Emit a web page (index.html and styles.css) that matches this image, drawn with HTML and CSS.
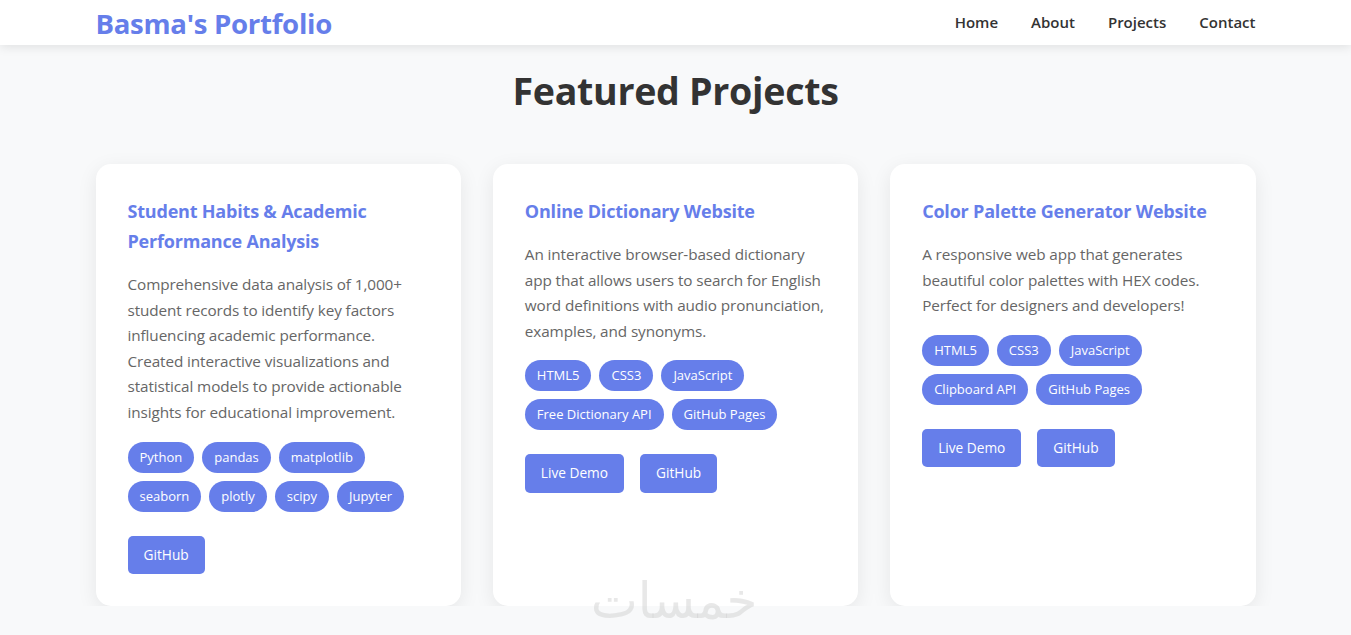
FILE: index.html
```html
<!DOCTYPE html>
<html lang="en">
<head>
<meta charset="utf-8">
<title>Basma's Portfolio</title>
<link rel="stylesheet" href="styles.css">
</head>
<body>
<header class="site-header">
  <div class="container header-inner">
    <a class="logo" href="#">Basma's Portfolio</a>
    <nav class="nav">
      <a href="#">Home</a>
      <a href="#">About</a>
      <a href="#">Projects</a>
      <a href="#">Contact</a>
    </nav>
  </div>
</header>
<main class="projects">
  <div class="container">
    <h1 class="section-title">Featured Projects</h1>
    <div class="grid">
      <article class="card">
        <h3 class="card-title">Student Habits &amp; Academic Performance Analysis</h3>
        <p class="card-text">Comprehensive data analysis of 1,000+ student records to identify key factors influencing academic performance. Created interactive visualizations and statistical models to provide actionable insights for educational improvement.</p>
        <div class="tags">
          <span class="tag">Python</span><span class="tag">pandas</span><span class="tag">matplotlib</span><span class="tag">seaborn</span><span class="tag">plotly</span><span class="tag">scipy</span><span class="tag">Jupyter</span>
        </div>
        <div class="buttons">
          <a class="btn" href="#">GitHub</a>
        </div>
      </article>
      <article class="card">
        <h3 class="card-title">Online Dictionary Website</h3>
        <p class="card-text">An interactive browser-based dictionary app that allows users to search for English word definitions with audio pronunciation, examples, and synonyms.</p>
        <div class="tags">
          <span class="tag">HTML5</span><span class="tag">CSS3</span><span class="tag">JavaScript</span><span class="tag">Free Dictionary API</span><span class="tag">GitHub Pages</span>
        </div>
        <div class="buttons">
          <a class="btn" href="#">Live Demo</a>
          <a class="btn" href="#">GitHub</a>
        </div>
      </article>
      <article class="card">
        <h3 class="card-title">Color Palette Generator Website</h3>
        <p class="card-text">A responsive web app that generates beautiful color palettes with HEX codes. Perfect for designers and developers!</p>
        <div class="tags">
          <span class="tag">HTML5</span><span class="tag">CSS3</span><span class="tag">JavaScript</span><span class="tag">Clipboard API</span><span class="tag">GitHub Pages</span>
        </div>
        <div class="buttons">
          <a class="btn" href="#">Live Demo</a>
          <a class="btn" href="#">GitHub</a>
        </div>
      </article>
    </div>
  </div>
</main>
<div class="watermark" dir="rtl">خمسات</div>
</body>
</html>
```
FILE: styles.css
```css
* { box-sizing: border-box; }
html, body { margin: 0; padding: 0; }
body {
  font-family: "Open Sans", "Noto Sans", "DejaVu Sans", sans-serif;
  background: #f8f9fa;
  color: #333;
  overflow: hidden;
}
.container {
  max-width: 1200px;
  margin: 0 auto;
  padding: 0 20px;
}
.site-header {
  background: #fff;
  height: 45px;
  box-shadow: 0 2px 10px rgba(0,0,0,0.1);
  position: relative;
  z-index: 2;
}
.header-inner {
  height: 45px;
  display: flex;
  align-items: center;
  justify-content: space-between;
}
.logo {
  color: #667eea;
  font-size: 27.6px;
  font-weight: 700;
  text-decoration: none;
  letter-spacing: -0.3px;
}
.nav { display: flex; gap: 33px; padding-bottom: 1px; }
.nav a {
  color: #333;
  text-decoration: none;
  font-size: 15px;
  font-weight: 600;
}
.projects { padding-top: 22px; }
.section-title {
  margin: 0 0 49px;
  text-align: center;
  font-size: 37.6px;
  line-height: 48px;
  font-weight: 700;
  color: #333;
  letter-spacing: -0.3px;
}
.grid {
  display: grid;
  grid-template-columns: repeat(3, 1fr);
  gap: 32px;
}
.card {
  background: #fff;
  border-radius: 15px;
  padding: 32px;
  box-shadow: 0 5px 20px rgba(0,0,0,0.08);
}
.card-title {
  margin: 0 0 16px;
  color: #667eea;
  font-size: 18px;
  line-height: 30px;
  font-weight: 700;
  letter-spacing: -0.2px;
}
.card-text {
  margin: 0 0 16px;
  color: #666;
  font-size: 15.3px;
  line-height: 25.6px;
  letter-spacing: -0.1px;
}
.tags {
  display: flex;
  flex-wrap: wrap;
  gap: 8px;
  margin-bottom: 24px;
}
.tag {
  background: #667eea;
  color: #fff;
  font-size: 13px;
  line-height: 21px;
  padding: 5px 12px;
  border-radius: 20px;
}
.buttons { display: flex; gap: 16px; }
.btn {
  background: #667eea;
  color: #fff;
  text-decoration: none;
  font-size: 13.7px;
  line-height: 18.6px;
  padding: 10px 16px;
  border-radius: 5px;
}
.watermark {
  position: fixed;
  left: 590px;
  top: 572px;
  width: 168px;
  text-align: center;
  font-family: "DejaVu Sans", sans-serif;
  font-size: 50px;
  color: rgba(205,205,205,0.45);
  pointer-events: none;
}
```
